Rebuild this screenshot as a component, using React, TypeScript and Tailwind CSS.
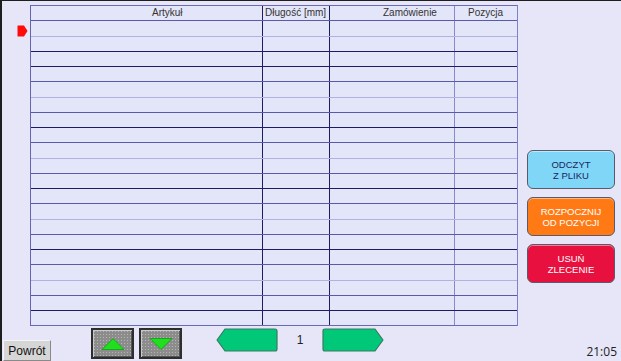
import React from 'react';

const rows = Array.from({ length: 20 }, (_, i) => i + 1);

function lineClass(i: number) {
  if (i === 20) return 'border-[#6a6ab4]';
  if (i % 4 === 3 || i === 2) return 'border-[#1c1c64]';
  if (i % 4 === 1) return 'border-[#b2b2e0]';
  return 'border-[#5a5aa8]';
}

function Marker() {
  return (
    <svg width="11" height="12" viewBox="0 0 11 12">
      <path d="M0.5 1 Q0.5 0.5 1 0.5 L7 0.5 L10.5 6 L7 11.5 L1 11.5 Q0.5 11.5 0.5 11 Z" fill="#ff0a0a" />
    </svg>
  );
}

function SideButton({ label1, label2, bg, text }: { label1: string; label2: string; bg: string; text: string }) {
  return (
    <button className={`w-[88px] h-[39px] rounded-[6px] border border-[#5a5a6a] shadow-[inset_0_1px_0_rgba(255,255,255,0.45)] flex flex-col items-center justify-center text-[9.5px] leading-[11px] ${bg} ${text}`}>
      <span>{label1}</span>
      <span>{label2}</span>
    </button>
  );
}

function ScrollButton({ up }: { up: boolean }) {
  return (
    <button className="w-[43px] h-[31px] border-2 border-[#2e2e2e] bg-[#8c8c8c] bg-[radial-gradient(#b4b4b4_0.7px,transparent_0.8px)] bg-[length:3px_3px] shadow-[inset_1px_1px_0_#c8c8c8,inset_-1px_-1px_0_#555] flex items-center justify-center">
      <svg width="24" height="12" viewBox="0 0 24 12">
        {up ? (
          <path d="M1 11.5 L12 0.5 L23 11.5 Z" fill="#1ee01e" stroke="#129a12" strokeWidth="0.8" />
        ) : (
          <path d="M1 0.5 L23 0.5 L12 11.5 Z" fill="#1ee01e" stroke="#129a12" strokeWidth="0.8" />
        )}
      </svg>
    </button>
  );
}

function PageArrow({ left }: { left: boolean }) {
  return (
    <button className="w-[62px] h-[24px]">
      <svg width="62" height="24" viewBox="0 0 62 24">
        {left ? (
          <path d="M1 12 L9 1 L59 1 Q61 1 61 3 L61 21 Q61 23 59 23 L9 23 Z" fill="#00c878" stroke="#3a7a60" strokeWidth="1.2" strokeLinejoin="round" />
        ) : (
          <path d="M61 12 L53 1 L3 1 Q1 1 1 3 L1 21 Q1 23 3 23 L53 23 Z" fill="#00c878" stroke="#3a7a60" strokeWidth="1.2" strokeLinejoin="round" />
        )}
      </svg>
    </button>
  );
}

export default function App() {
  return (
    <div className="w-[621px] h-[361px] overflow-hidden bg-[#e6e6f8] border-t border-l-2 border-[#1e1e1e] flex flex-col font-['Liberation_Sans',Arial,sans-serif]">
      <div className="flex flex-row h-[325px] pt-[4px]">
        <div className="w-[28px] flex flex-col">
          <div className="mt-[20px] ml-[15px]">
            <Marker />
          </div>
        </div>

        <div className="w-[488px] flex flex-col bg-[#e3e5f8] border-t border-l border-r border-t-[#6a6ab4] border-l-[#6464b0] border-r-[#8080c8] self-start">
          <div className="flex flex-row h-[15px] border-b border-[#5a5aa8] text-[10px] leading-[14px] text-[#333]">
            <div className="w-[232px] border-r border-[#1c1c64] pl-[121px]">Artykuł</div>
            <div className="w-[67px] border-r border-[#1c1c64] pl-[2px]">Długość [mm]</div>
            <div className="w-[125px] border-r border-[#8888cc] pl-[53px]">Zamówienie</div>
            <div className="w-[62px] pl-[13px]">Pozycja</div>
          </div>
          {rows.map((i) => (
            <div key={i} className={`flex flex-row border-b ${lineClass(i)} ${i % 4 === 1 ? 'h-[16px]' : 'h-[15px]'}`}>
              <div className="w-[232px] border-r border-[#1c1c64]"></div>
              <div className="w-[67px] border-r border-[#1c1c64]"></div>
              <div className="w-[125px] border-r border-[#8888cc]"></div>
              <div className="w-[62px]"></div>
            </div>
          ))}
        </div>

        <div className="flex flex-col gap-[8px] ml-[9px] pt-[145px]">
          <SideButton label1="ODCZYT" label2="Z PLIKU" bg="bg-[#80d6f6]" text="text-[#1c2460]" />
          <SideButton label1="ROZPOCZNIJ" label2="OD POZYCJI" bg="bg-[#ff7a14]" text="text-white" />
          <SideButton label1="USUŃ" label2="ZLECENIE" bg="bg-[#e8103e]" text="text-white" />
        </div>
      </div>

      <div className="flex flex-row flex-1">
        <button className="self-end w-[48px] h-[21px] ml-[1px] bg-[#d6d6d6] border border-t-[#f4f4f4] border-l-[#f4f4f4] border-r-[#8a8a8a] border-b-[#8a8a8a] text-[12px] leading-[18px] text-[#111]">
          Powrót
        </button>
        <div className="flex flex-row gap-[5px] ml-[40px] mt-[2px] self-start">
          <ScrollButton up={true} />
          <ScrollButton up={false} />
        </div>
        <div className="flex flex-row items-center ml-[34px] mt-[2px] self-start h-[24px]">
          <PageArrow left={true} />
          <span className="w-[44px] text-center text-[12px] text-[#222]">1</span>
          <PageArrow left={false} />
        </div>
        <span className="ml-auto mr-[4px] self-end mb-[1px] text-[12px] leading-[16px] text-[#222] font-['Open_Sans',sans-serif]">21:05</span>
      </div>
    </div>
  );
}
